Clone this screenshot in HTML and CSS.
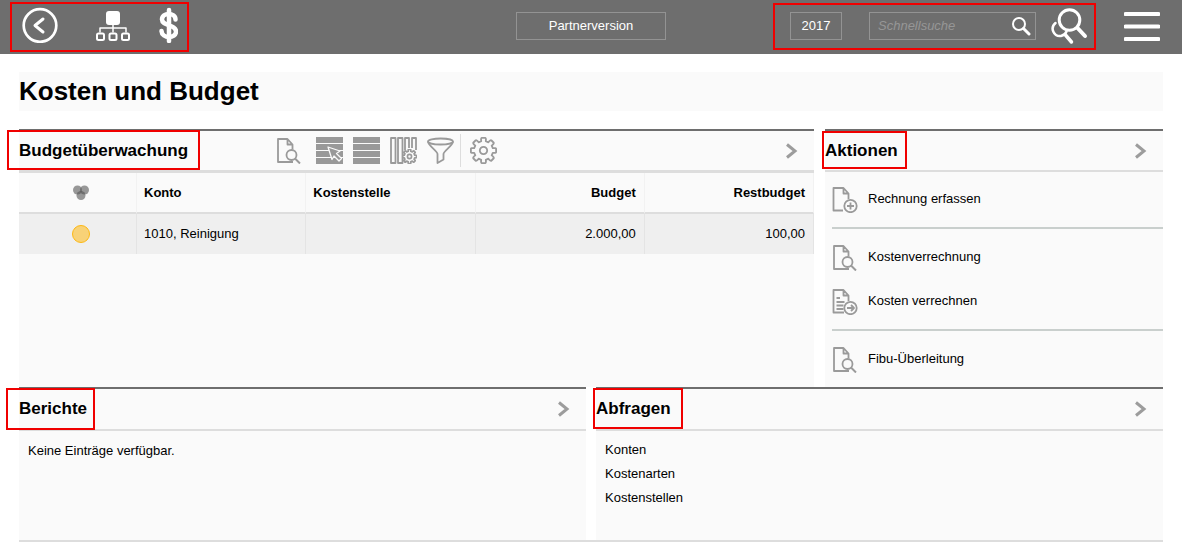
FILE: index.html
```html
<!DOCTYPE html>
<html lang="de">
<head>
<meta charset="utf-8">
<meta name="viewport" content="width=device-width, initial-scale=1">
<title>Kosten und Budget</title>
<link rel="stylesheet" href="styles.css">
</head>
<body>
<svg class="sprite" aria-hidden="true">
  <symbol id="doc-search" viewBox="0 0 27 27"><path d="M12 25H2V2h9.500l5 5.500v5M11.500 2v5.500h5M10 25h7"/><circle cx="15.500" cy="18" r="5"/><path d="M19 21.500l5 5" stroke-width="2"/></symbol>
  <symbol id="gear" viewBox="-13.500 -13.500 27 27"><path d="M9.300-2.300Q12.800-2.800 12.600-1.500V1.500Q12.800 2.800 9.300 2.300L8.200 4.900Q11 7 10 8L8 10Q7 11 4.900 8.200L2.300 9.300Q2.800 12.800 1.500 12.600H-1.500Q-2.800 12.800-2.300 9.300L-4.900 8.200Q-7 11-8 10L-10 8Q-11 7-8.200 4.900L-9.300 2.300Q-12.800 2.800-12.600 1.500V-1.500Q-12.800-2.800-9.300-2.300L-8.200-4.900Q-11-7-10-8L-8-10Q-7-11-4.900-8.200L-2.300-9.300Q-2.800-12.800-1.500-12.600H1.500Q2.800-12.800 2.300-9.300L4.900-8.200Q7-11 8-10L10-8Q11-7 8.200-4.900Z"/><circle r="3.700"/></symbol>
  <symbol id="chevron" viewBox="0 0 12 16"><path d="M1 1.500L9 8l-8 6.500" stroke-width="3"/></symbol>
</svg>

<header class="topbar">
  <nav class="topbar-nav marked" aria-label="Navigation">
    <button class="icon-button" aria-label="Zurück"><svg class="icon-large" viewBox="0 0 36 36"><circle cx="18" cy="18.500" r="16.300" stroke-width="2.700"/><path d="M21 12l-8 6.500 8 6.500" stroke-width="3"/></svg></button>
    <button class="icon-button" aria-label="Struktur"><svg class="icon-large" viewBox="0 0 36 36"><rect x="12" y="4" width="14" height="14" rx="3" fill="#fff" stroke="none"/><path d="M19 17v8M6 25v-4h26v4" stroke-width="1.500"/><rect x="3" y="26.500" width="7" height="6.500" rx="1.500"/><rect x="15.500" y="26.500" width="7" height="6.500" rx="1.500"/><rect x="28" y="26.500" width="7" height="6.500" rx="1.500"/></svg></button>
    <button class="icon-button" aria-label="Kosten"><svg class="icon-narrow" viewBox="0 0 20 36"><path d="M17.500 12.500C17.500 5 4 5 4 12.500c0 6.500 14 5 14 12 0 7.500-14 7.500-14.500-.500" stroke-width="4.500"/><path d="M11 3v31" stroke-width="4.500"/></svg></button>
  </nav>
  <button class="box-button version">Partnerversion</button>
  <div class="topbar-tools">
    <div class="tools-group marked">
      <button class="box-button year">2017</button>
      <form class="search" role="search">
        <input class="search-input" type="search" placeholder="Schnellsuche" aria-label="Schnellsuche">
        <button class="icon-button" type="button" aria-label="Suchen"><svg class="icon-small" viewBox="0 0 20 20"><circle cx="8" cy="8" r="6"/><path d="M12.500 12.500l5.500 5.500" stroke-width="3"/></svg></button>
      </form>
      <button class="icon-button" aria-label="Erweiterte Suche"><svg class="icon-double" viewBox="0 0 38 38"><circle cx="19.500" cy="13" r="10.300" stroke-width="3"/><path d="M27.500 21l7.500 8" stroke-width="4"/><path d="M5.500 16C-.500 21 4 30 11 29c2.500-.500 4.500-2 5.500-4.500" stroke-width="2.500"/><path d="M15.500 28l6 7" stroke-width="3.500"/></svg></button>
    </div>
    <button class="icon-button" aria-label="Menü"><svg class="icon-large" viewBox="0 0 36 36"><path d="M1.500 6h33M1.500 18.500h33M1.500 31h33" stroke-width="4"/></svg></button>
  </div>
</header>

<main class="page">
  <h1 class="page-title">Kosten und Budget</h1>

  <div class="row row-top">
    <section class="panel">
      <div class="panel-head">
        <h2 class="panel-title title-wide"><span class="marked mark-budget">Budgetüberwachung</span></h2>
        <div class="toolbar">
          <button class="icon-button tool-first" aria-label="Anzeigen"><svg class="icon"><use href="#doc-search"/></svg></button>
          <button class="icon-button" aria-label="Auswahl"><svg class="icon" viewBox="0 0 27 27"><path class="solid" d="M0 0h27v6H0zM0 7h27v6H0zM0 14h27v6H0zM0 21h27v6H0z"/><path class="pointer" d="M12 10l12 4-3.500 2.500 5 5-2.500 2.500-5-5-2 3.500z"/></svg></button>
          <button class="icon-button" aria-label="Zeilen"><svg class="icon" viewBox="0 0 27 27"><path class="solid" d="M0 0h27v6H0zM0 7h27v6H0zM0 14h27v6H0zM0 21h27v6H0z"/></svg></button>
          <button class="icon-button" aria-label="Spalten"><svg class="icon" viewBox="0 0 27 27"><path d="M1 1h4.500v25H1zM8 1h4.500v25H8zM15 13V1h4v10M22 11V1h4v12M15 25.500v-2"/><use href="#gear" x="12" y="12" width="15" height="15" stroke-width="3"/></svg></button>
          <button class="icon-button" aria-label="Filter"><svg class="icon" viewBox="0 0 27 27"><ellipse cx="13.500" cy="4.500" rx="12.500" ry="3"/><path d="M1 4.500C1 8.500 10.500 14 10.500 17v9l6-3.500V17C16.500 14 26 8.500 26 4.500"/></svg></button>
          <button class="icon-button tool-last" aria-label="Einstellungen"><svg class="icon"><use href="#gear"/></svg></button>
        </div>
        <button class="icon-button more" aria-label="Budgetüberwachung öffnen"><svg class="chevron"><use href="#chevron"/></svg></button>
      </div>
      <table class="budget">
        <thead>
          <tr>
            <th class="status"><svg class="status-all" viewBox="0 0 16 16" role="img" aria-label="Status"><circle cx="4.500" cy="5" r="4.500"/><circle cx="11.500" cy="5" r="4.500"/><circle cx="8" cy="10.500" r="4.500"/></svg></th>
            <th>Konto</th><th>Kostenstelle</th><th class="number">Budget</th><th class="number">Restbudget</th>
          </tr>
        </thead>
        <tbody>
          <tr><td class="status"><span class="dot" role="img" aria-label="Gelb"></span></td><td>1010, Reinigung</td><td></td><td class="number">2.000,00</td><td class="number">100,00</td></tr>
        </tbody>
      </table>
    </section>

    <section class="panel">
      <div class="panel-head">
        <h2 class="panel-title"><span class="marked mark-actions">Aktionen</span></h2>
        <button class="icon-button more" aria-label="Aktionen öffnen"><svg class="chevron"><use href="#chevron"/></svg></button>
      </div>
      <div class="actions">
        <a class="action" href="#"><svg class="icon" viewBox="0 0 27 27"><path d="M11 24.500H1.500V2h10l5 5.500V13M11.500 2v5.500h5"/><circle cx="18.500" cy="20" r="6.200"/><path d="M15 20h7M18.500 16.500v7"/></svg>Rechnung erfassen</a>
        <hr class="divider">
        <a class="action" href="#"><svg class="icon"><use href="#doc-search"/></svg>Kostenverrechnung</a>
        <a class="action" href="#"><svg class="icon" viewBox="0 0 27 27"><path d="M12 24.500H1.500V2h10l5 5.500V13M11.500 2v5.500h5M4.500 10H8M4.500 14h8M4.500 17.500h7M4.500 21h7"/><circle cx="18.500" cy="20" r="6.200"/><path d="M15 20h7M19 17l3 3-3 3"/></svg>Kosten verrechnen</a>
        <hr class="divider">
        <a class="action" href="#"><svg class="icon"><use href="#doc-search"/></svg>Fibu-Überleitung</a>
      </div>
    </section>
  </div>

  <div class="row row-bottom">
    <section class="panel">
      <div class="panel-head">
        <h2 class="panel-title"><span class="marked mark-reports">Berichte</span></h2>
        <button class="icon-button more" aria-label="Berichte öffnen"><svg class="chevron"><use href="#chevron"/></svg></button>
      </div>
      <p class="empty">Keine Einträge verfügbar.</p>
    </section>
    <section class="panel">
      <div class="panel-head">
        <h2 class="panel-title"><span class="marked mark-queries">Abfragen</span></h2>
        <button class="icon-button more" aria-label="Abfragen öffnen"><svg class="chevron"><use href="#chevron"/></svg></button>
      </div>
      <ul class="links">
        <li><a href="#">Konten</a></li>
        <li><a href="#">Kostenarten</a></li>
        <li><a href="#">Kostenstellen</a></li>
      </ul>
    </section>
  </div>
</main>
</body>
</html>
```
FILE: styles.css
```css
* { box-sizing: border-box; }

body {
  margin: 0;
  background: #fff;
  color: #000;
  font: 13px/20px "Liberation Sans", Arial, sans-serif;
}

a { color: inherit; text-decoration: none; }
button, input { font: inherit; }

.sprite { position: absolute; width: 0; height: 0; }

svg { display: block; fill: none; stroke-linecap: round; stroke-linejoin: round; }

.icon-button {
  display: block;
  flex: none;
  padding: 0;
  border: 0;
  background: none;
}

.icon { width: 27px; height: 27px; flex: none; stroke: #9a9a9a; stroke-width: 1.8; stroke-linecap: butt; }
.icon .solid { fill: #999; stroke: none; }
.icon .pointer { fill: #999; stroke: #fafafa; stroke-width: 1.3; }
.chevron { width: 12px; height: 16px; stroke: #9c9c9c; stroke-linecap: butt; stroke-linejoin: miter; }

/* Red highlight frames */
.marked { position: relative; }
.marked::after {
  content: "";
  position: absolute;
  inset: 0;
  border: 2px solid #f00000;
  pointer-events: none;
}

/* Top bar */
.topbar {
  display: grid;
  grid-template-columns: 1fr auto 1fr;
  align-items: center;
  height: 54px;
  padding: 0 22px 2px 10px;
  background: #6e6e6e;
}
.topbar svg { stroke: #fff; stroke-width: 2; }
.topbar-nav {
  display: flex;
  align-items: center;
  justify-self: start;
  height: 50px;
  margin-top: 2px;
  padding: 0 11px 4px 12px;
}
.topbar-nav .icon-button + .icon-button { margin-left: 36px; }
.topbar-nav .icon-button:last-child { margin-left: 28px; }
.icon-large { width: 36px; height: 36px; }
.icon-narrow { width: 20px; height: 36px; }
.icon-small { width: 20px; height: 20px; }
.icon-double { width: 38px; height: 38px; }

.box-button {
  height: 28px;
  padding: 0;
  border: 1px solid #939393;
  background: none;
  color: #fff;
}
.version { width: 150px; margin-left: 12px; }
.year { width: 52px; margin-right: 27px; }

.topbar-tools { display: flex; align-items: center; justify-content: flex-end; gap: 28px; }
.tools-group { display: flex; align-items: center; height: 47px; padding: 0 8px 0 17px; }
.search {
  display: flex;
  align-items: center;
  width: 167px;
  height: 28px;
  margin-right: 14px;
  padding: 0 4px 0 8px;
  border: 1px solid #939393;
}
.search-input {
  flex: 1;
  min-width: 0;
  padding: 0;
  border: 0;
  outline: 0;
  background: none;
  color: #fff;
  appearance: none;
}
.search-input::placeholder { color: #969696; font-style: italic; opacity: 1; }

/* Page */
.page { padding: 18px 19px 0; }
.page-title {
  margin: 0 0 18px;
  background: #fafafa;
  font-size: 26px;
  line-height: 39px;
}

.row { display: grid; }
.row-top { grid-template-columns: 795fr 338fr; gap: 11px; }
.row-bottom { grid-template-columns: 1fr 1fr; gap: 10px; min-height: 155px; border-bottom: 2px solid #ddd; }

.panel { border-top: 2px solid #6e6e6e; background: #fafafa; }
.panel-head {
  display: flex;
  align-items: center;
  height: 41px;
  padding-right: 16px;
  border-bottom: 2px solid #ddd;
}
.row-bottom .panel-head { height: 42px; }
.panel-title { margin: 0; font-size: 17px; line-height: 20px; }
.title-wide { width: 257px; }
.more { margin-left: auto; }

.mark-budget::after { inset: -11px -12px -10px -12px; }
.mark-actions::after { inset: -10px -9px -9px -3px; }
.mark-reports::after { inset: -11px -8px -12px -13px; }
.mark-queries::after { inset: -11px -12px -11px -3px; }

.toolbar { display: flex; align-items: center; gap: 10px; }
.tool-first { width: 30px; }
.tool-last { margin-left: -4px; padding: 3px 0 3px 9px; border-left: 1px solid #ddd; }

/* Budget table */
.budget {
  width: 100%;
  table-layout: fixed;
  border-collapse: separate;
  border-spacing: 0;
  border-top: 1px solid #ddd;
}
.budget th, .budget td {
  height: 40px;
  padding: 0 8px 0 7px;
  border-right: 1px solid #e4e4e4;
  text-align: left;
}
.budget th { height: 41px; border-right-color: #f2f2f2; border-bottom: 2px solid #ddd; }
.budget td { background: #efefef; }
.budget .status { width: 118px; padding: 0 0 0 6px; }
.budget .number { text-align: right; }
.status-all { width: 16px; height: 16px; margin: 0 auto; fill: #555; fill-opacity: .6; }
.dot {
  display: block;
  width: 18px;
  height: 18px;
  margin: 0 auto;
  border: 1px solid #fdb813;
  border-radius: 50%;
  background: #f8d277;
}

/* Actions */
.actions { padding: 5px 0 6px 7px; }
.action { display: flex; align-items: center; gap: 9px; height: 44px; }
.divider { height: 2px; margin: 6px 0; border: 0; background: #c9cfcd; }

/* Lists */
.empty { margin: 0; padding: 8px 9px; line-height: 24px; }
.links { margin: 0; padding: 7px 9px; list-style: none; line-height: 24px; }
```
